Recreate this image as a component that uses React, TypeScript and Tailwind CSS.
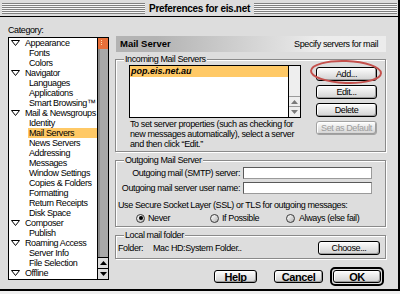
import clsx from 'clsx'

type Row = { label: string; level: 0 | 1; selected?: boolean }

const rows: Row[] = [
  { label: 'Appearance', level: 0 },
  { label: 'Fonts', level: 1 },
  { label: 'Colors', level: 1 },
  { label: 'Navigator', level: 0 },
  { label: 'Languages', level: 1 },
  { label: 'Applications', level: 1 },
  { label: 'Smart Browsing™', level: 1 },
  { label: 'Mail & Newsgroups', level: 0 },
  { label: 'Identity', level: 1 },
  { label: 'Mail Servers', level: 1, selected: true },
  { label: 'News Servers', level: 1 },
  { label: 'Addressing', level: 1 },
  { label: 'Messages', level: 1 },
  { label: 'Window Settings', level: 1 },
  { label: 'Copies & Folders', level: 1 },
  { label: 'Formatting', level: 1 },
  { label: 'Return Receipts', level: 1 },
  { label: 'Disk Space', level: 1 },
  { label: 'Composer', level: 0 },
  { label: 'Publish', level: 1 },
  { label: 'Roaming Access', level: 0 },
  { label: 'Server Info', level: 1 },
  { label: 'File Selection', level: 1 },
  { label: 'Offline', level: 0 },
]

function Triangle() {
  return (
    <svg width="9" height="6" viewBox="0 0 9 6" className="shrink-0">
      <path d="M0.5 0.5 H8.5 L4.5 5.5 Z" fill="#ffffff" stroke="#000000" strokeWidth="1" />
    </svg>
  )
}

function Arrow({ up, color }: { up?: boolean; color: string }) {
  return (
    <svg width="7" height="4" viewBox="0 0 7 4">
      <path d={up ? 'M0 4 L3.5 0 L7 4 Z' : 'M0 0 L7 0 L3.5 4 Z'} fill={color} />
    </svg>
  )
}

function PushButton({
  children,
  className,
  disabled = false,
}: {
  children: React.ReactNode
  className?: string
  disabled?: boolean
}) {
  return (
    <div
      className={clsx(
        'flex items-center justify-center rounded-[3px] border bg-gradient-to-b from-[#fdfdfd] to-[#d2d2d2] shadow-[inset_-1px_-1px_0_#9c9c9c,inset_1px_1px_0_#ffffff]',
        disabled ? 'border-[#a2a2a2] text-[#9c9c9c]' : 'border-black text-black',
        className
      )}
    >
      {children}
    </div>
  )
}

function Radio({ checked = false }: { checked?: boolean }) {
  return (
    <div className="w-[9px] h-[9px] rounded-full border border-[#3a3a3a] bg-gradient-to-br from-[#ffffff] to-[#b4b4b4] flex items-center justify-center shrink-0">
      {checked && <div className="w-[4px] h-[4px] rounded-full bg-black" />}
    </div>
  )
}

function TextField() {
  return (
    <div className="w-[129px] h-[12px] ml-[3px] bg-white border border-[#5a5a5a] border-b-[#9a9a9a] border-r-[#9a9a9a]" />
  )
}

const stripes =
  'flex-1 h-full bg-[repeating-linear-gradient(to_bottom,#808080_0px,#808080_1px,#f6f6f6_1px,#f6f6f6_2px)]'

export default function App() {
  return (
    <div className="relative w-[400px] h-[294px] overflow-hidden bg-[#efefef] font-['Liberation_Sans',Arial,sans-serif] text-[9px] leading-[10px] tracking-[-0.4px] text-black">
      <div className="w-[400px] h-[291px] flex flex-col bg-[#dddddd] border-r-2 border-b-2 border-black">
        {/* title bar */}
        <div className="h-[17px] shrink-0 border-b border-black pt-[3px] pl-[2px] pr-[1px]">
          <div className="h-[11px] flex items-center">
            <div className={stripes} />
            <span className="px-[4px] text-[10px] leading-[11px] font-bold tracking-[-0.3px]">
              Preferences for eis.net
            </span>
            <div className={stripes} />
          </div>
        </div>

        <div className="flex-1 flex">
          {/* category list */}
          <div className="w-[109px] shrink-0 pl-[8px] pt-[8px]">
            <div className="h-[10px]">Category:</div>
            <div className="mt-[2px] w-[101px] h-[243px] border border-black flex">
              <div className="flex-1 bg-white overflow-hidden">
                {rows.map((r) =>
                  r.level === 0 ? (
                    <div key={r.label} className="h-[10px] pl-[2px] flex items-center whitespace-nowrap">
                      <Triangle />
                      <span className="ml-[5px]">{r.label}</span>
                    </div>
                  ) : (
                    <div
                      key={r.label}
                      className={clsx(
                        'h-[10px] ml-[19px] pl-[1px] whitespace-nowrap',
                        r.selected && 'bg-[#ffc966]'
                      )}
                    >
                      {r.label}
                    </div>
                  )
                )}
              </div>
              <div className="w-[11px] border-l border-black flex flex-col">
                <div className="h-[11px] bg-[#e8703a] pl-[3px] pt-[2px] flex flex-col gap-[1px]">
                  <div className="w-[1px] h-[1px] bg-[#ffd9a8]" />
                  <div className="w-[1px] h-[1px] bg-[#ffd9a8]" />
                  <div className="w-[1px] h-[1px] bg-[#ffd9a8]" />
                </div>
                <div className="flex-1 bg-[#a9a9a9] shadow-[inset_2px_0_0_#8c8c8c]" />
                <div className="h-[11px] border-t border-black bg-[#dddddd] flex items-center justify-center">
                  <Arrow up color="#000000" />
                </div>
                <div className="h-[11px] border-t border-black bg-[#dddddd] flex items-center justify-center">
                  <Arrow color="#000000" />
                </div>
              </div>
            </div>
          </div>

          {/* settings panel */}
          <div className="ml-[6px] w-[271px] pt-[19px] flex flex-col">
            <div className="ml-[1px] w-[270px] h-[16px] flex items-center justify-between pl-[4px] pr-[8px] bg-gradient-to-r from-[#b3b3b3] from-15% to-[#ececec] to-75%">
              <span className="font-bold text-[9.5px] tracking-normal">Mail Server</span>
              <span>Specify servers for mail</span>
            </div>

            {/* incoming */}
            <fieldset className="mt-[2px] h-[98px] border border-[#8a8a8a] shadow-[1px_1px_0_#ffffff,inset_1px_1px_0_#ffffff]">
              <legend className="ml-[8px] px-[1px] bg-[#dddddd] h-[10px]">Incoming Mail Servers</legend>
              <div className="pl-[13px] pt-[1px] flex">
                <div className="w-[172px]">
                  <div className="h-[53px] border border-black flex">
                    <div className="flex-1 bg-white">
                      <div className="h-[11px] bg-[#ffc966] pl-[1px] font-bold italic tracking-normal leading-[11px]">
                        pop.eis.net.au
                      </div>
                    </div>
                    <div className="w-[12px] border-l border-black bg-[#eeeeee] flex flex-col justify-end">
                      <div className="h-[10px] border-t border-[#9a9a9a] flex items-center justify-center">
                        <Arrow up color="#7a7a7a" />
                      </div>
                      <div className="h-[11px] border-t border-[#9a9a9a] flex items-center justify-center">
                        <Arrow color="#7a7a7a" />
                      </div>
                    </div>
                  </div>
                  <div className="mt-[1px] pl-[1px] whitespace-nowrap">
                    <div>To set server properties (such as checking for</div>
                    <div>new messages automatically), select a server</div>
                    <div>and then click “Edit.”</div>
                  </div>
                </div>
                <div className="ml-[15px] mt-[2px] w-[61px] flex flex-col gap-[4px]">
                  <PushButton className="h-[14px]">Add...</PushButton>
                  <PushButton className="h-[14px]">Edit...</PushButton>
                  <PushButton className="h-[14px]">Delete</PushButton>
                  <PushButton className="h-[14px]" disabled>
                    Set as Default
                  </PushButton>
                </div>
              </div>
            </fieldset>

            {/* outgoing */}
            <fieldset className="mt-[3px] h-[72px] border border-[#8a8a8a] shadow-[1px_1px_0_#ffffff,inset_1px_1px_0_#ffffff]">
              <legend className="ml-[8px] px-[1px] bg-[#dddddd] h-[10px]">Outgoing Mail Server</legend>
              <div className="pt-[2px] flex flex-col">
                <div className="h-[12px] flex items-center">
                  <div className="w-[124px] text-right whitespace-nowrap">Outgoing mail (SMTP) server:</div>
                  <TextField />
                </div>
                <div className="mt-[3px] h-[12px] flex items-center">
                  <div className="w-[124px] text-right whitespace-nowrap">Outgoing mail server user name:</div>
                  <TextField />
                </div>
                <div className="mt-[6px] pl-[2px] whitespace-nowrap">
                  Use Secure Socket Layer (SSL) or TLS for outgoing messages:
                </div>
                <div className="mt-[3px] h-[10px] pl-[20px] flex items-center">
                  <div className="w-[74px] flex items-center gap-[3px]">
                    <Radio checked />
                    <span>Never</span>
                  </div>
                  <div className="w-[76px] flex items-center gap-[3px]">
                    <Radio />
                    <span>If Possible</span>
                  </div>
                  <div className="flex items-center gap-[4px]">
                    <Radio />
                    <span>Always (else fail)</span>
                  </div>
                </div>
              </div>
            </fieldset>

            {/* local folder */}
            <fieldset className="mt-[3px] h-[29px] border border-[#8a8a8a] shadow-[1px_1px_0_#ffffff,inset_1px_1px_0_#ffffff]">
              <legend className="ml-[8px] px-[1px] bg-[#dddddd] h-[10px]">Local mail folder</legend>
              <div className="pt-[1px] pl-[2px] pr-[5px] flex items-center">
                <div className="w-[35px]">Folder:</div>
                <div className="flex-1">Mac HD:System Folder..</div>
                <PushButton className="w-[62px] h-[14px]">Choose...</PushButton>
              </div>
            </fieldset>

            {/* dialog buttons */}
            <div className="mt-[8px] h-[19px] pr-[2px] flex items-center justify-end text-[11px] font-bold tracking-[-0.4px]">
              <PushButton className="w-[43px] h-[13px]">Help</PushButton>
              <PushButton className="ml-[17px] w-[49px] h-[13px]">Cancel</PushButton>
              <div className="ml-[7px] w-[54px] h-[19px] rounded-[5px] border-2 border-black p-[1px]">
                <PushButton className="h-full">OK</PushButton>
              </div>
            </div>
          </div>
        </div>
      </div>

      {/* hand-drawn annotation around "Add..." */}
      <svg
        className="absolute left-[308px] top-[58px] pointer-events-none"
        width="78"
        height="28"
        viewBox="0 0 78 28"
      >
        <ellipse
          cx="38"
          cy="14"
          rx="35"
          ry="11"
          fill="none"
          stroke="#c4504c"
          strokeWidth="2"
          transform="rotate(2 38 14)"
        />
      </svg>
    </div>
  )
}
